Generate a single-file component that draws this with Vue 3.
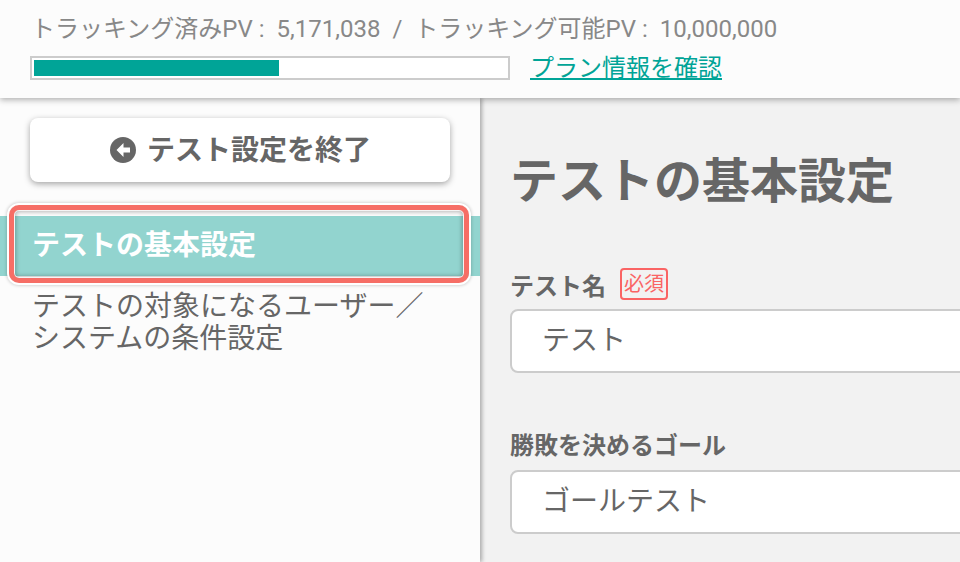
<script setup>
const used = 0.52
const pct = (used * 100) + '%'
</script>

<template>
  <div class="page">
    <header class="top">
      <div class="stats">トラッキング済みPV :&nbsp;&nbsp;5,171,038&nbsp;&nbsp;/&nbsp;&nbsp;トラッキング可能PV :&nbsp;&nbsp;10,000,000</div>
      <div class="barrow">
        <div class="bar"><div class="fill" :style="{ width: pct }"></div></div>
        <a class="plan">プラン情報を確認</a>
      </div>
    </header>
    <div class="body">
      <aside class="side">
        <button class="endbtn">
          <svg class="ico" viewBox="0 0 26 26" width="26" height="26">
            <circle cx="13" cy="13" r="13" fill="#666" />
            <path d="M13.5 6 6.5 13l7 7v-4.500h6.500v-5h-6.500z" fill="#fff" />
          </svg>
          <span>テスト設定を終了</span>
        </button>
        <nav class="nav">
          <div class="item active"><span>テストの基本設定</span></div>
          <div class="item">テストの対象になるユーザー／<br />システムの条件設定</div>
        </nav>
      </aside>
      <main class="main">
        <h1>テストの基本設定</h1>
        <div class="field">
          <div class="label">テスト名<span class="req">必須</span></div>
          <div class="input">テスト</div>
        </div>
        <div class="field second">
          <div class="label">勝敗を決めるゴール</div>
          <div class="input">ゴールテスト</div>
        </div>
      </main>
    </div>
  </div>
</template>

<style>
html, body { margin: 0; overflow: hidden; }
</style>

<style scoped>
.page {
  width: 960px;
  height: 562px;
  overflow: hidden;
  display: flex;
  flex-direction: column;
  font-family: Roboto, "Noto Sans CJK JP", sans-serif;
  color: #666;
  background: #f2f2f2;
}
.top {
  height: 98px;
  box-sizing: border-box;
  padding: 14px 0 0 30px;
  background: #fcfcfc;
  box-shadow: 0 2px 6px rgba(0, 0, 0, .3);
  position: relative;
  z-index: 2;
}
.stats { font-size: 24px; line-height: 30px; color: #888; white-space: nowrap; padding-left: 1px; letter-spacing: .01px; }
.barrow { display: flex; align-items: center; gap: 20px; margin-top: 9px; }
.bar {
  width: 480px;
  height: 24px;
  box-sizing: border-box;
  border: 2px solid #ccc;
  padding: 2px;
  background: #fff;
}
.fill { height: 100%; background: #00a497; }
.plan { font-size: 24px; line-height: 30px; color: #00a497; text-decoration: underline; }
.body { flex: 1; display: flex; min-height: 0; }
.side {
  width: 480px;
  flex: none;
  background: #fcfcfc;
  box-shadow: 2px 0 4px rgba(0, 0, 0, .3);
  padding-top: 20px;
  box-sizing: border-box;
  position: relative;
  z-index: 1;
}
.endbtn {
  display: flex;
  align-items: center;
  justify-content: center;
  gap: 12px;
  width: 420px;
  height: 64px;
  margin-left: 30px;
  padding: 0 0 4px;
  border: 0;
  border-radius: 8px;
  background: #fff;
  box-shadow: 0 2px 6px rgba(0, 0, 0, .35);
  font: 700 28px Roboto, "Noto Sans CJK JP", sans-serif;
  color: #666;
}
.ico { flex: none; transform: translate(1px, 2px); }
.nav { margin-top: 34px; }
.item {
  font-size: 28px;
  line-height: 32px;
  padding: 0 0 0 32px;
  color: #666;
  white-space: nowrap;
}
.item.active {
  height: 60px;
  line-height: 60px;
  margin-bottom: 15px;
  background: #92d4cf;
  color: #fff;
  font-weight: 700;
  position: relative;
}
.item.active::before {
  content: "";
  position: absolute;
  left: 9px;
  top: -11px;
  width: 460px;
  height: 78px;
  box-sizing: border-box;
  border: 5px solid #f66e66;
  border-radius: 10px;
  box-shadow: 0 0 0 2px #fff, 0 0 3px 3px rgba(0, 0, 0, .15), inset 0 0 0 1px #f4f4f4, inset 0 0 4px 2px rgba(0, 0, 0, .28);
}
.item.active span { position: relative; }
.main { flex: 1; padding: 49px 0 0 30px; min-width: 0; overflow: hidden; }
h1 { margin: 0; font-size: 48px; line-height: 70px; font-weight: 700; color: #666; white-space: nowrap; }
.field { margin-top: 51px; }
.field.second { margin-top: 54px; }
.label {
  display: flex;
  align-items: center;
  height: 32px;
  font-size: 24px;
  font-weight: 700;
  color: #666;
  white-space: nowrap;
}
.req {
  margin-left: 14px;
  width: 48px;
  height: 32px;
  box-sizing: border-box;
  border: 2px solid #fa6464;
  border-radius: 4px;
  color: #fa6464;
  font-size: 20px;
  font-weight: 400;
  line-height: 28px;
  text-align: center;
}
.input {
  width: 600px;
  height: 64px;
  margin-top: 9px;
  box-sizing: border-box;
  border: 2px solid #ccc;
  border-radius: 8px;
  background: #fff;
  padding-left: 30px;
  font-size: 28px;
  line-height: 60px;
  color: #666;
}
.second .input { margin-top: 11px; }
</style>
